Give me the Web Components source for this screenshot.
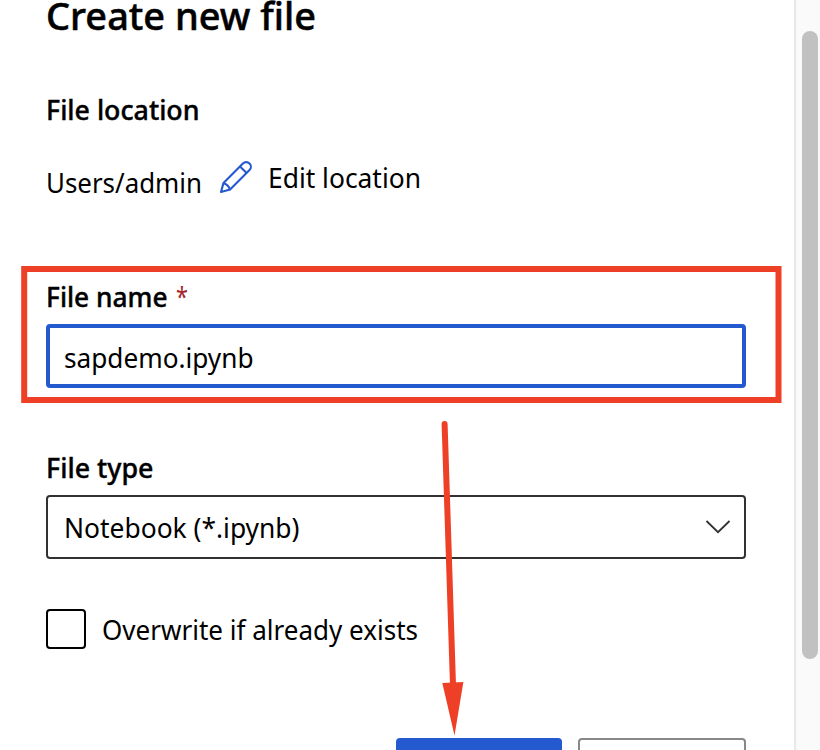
<!DOCTYPE html>
<html lang="en"><head><meta charset="utf-8"><title>Create new file</title>
<style>
html,body{margin:0;height:750px;overflow:hidden;background:#fff}
body{font-family:"Noto Sans","Open Sans",sans-serif;color:#000}
</style></head><body>
<create-file-page></create-file-page>
<script>
// A single line of text, condensed or widened to its measure.
customElements.define('fit-text', class extends HTMLElement{
  connectedCallback(){
    const r=this.attachShadow({mode:'open'});
    r.innerHTML='<style>:host{display:block;height:38px;font-size:27px;line-height:38px;white-space:pre;flex:none}span{display:inline-block;transform-origin:0 50%}</style><span><slot></slot></span>';
    const w=+this.getAttribute('measure'), s=r.querySelector('span');
    this.style.width=w+'px';
    s.style.transform='scaleX('+w/s.getBoundingClientRect().width+')';
  }
});
function define(name,html){
  const t=document.createElement('template'); t.innerHTML=html;
  customElements.define(name,class extends HTMLElement{
    constructor(){super();this.attachShadow({mode:'open'}).append(document.importNode(t.content,true));}
  });
}
define('pencil-icon','<style>:host{display:block;width:34px;height:34px}svg{display:block}</style><svg width="34" height="34" viewBox="0 0 34 34" fill="none" stroke="#2559cf" stroke-width="2.1" stroke-linejoin="round"><path d="M2 32L4.5 22.9L23.9 3.5A4.6 4.6 0 0 1 30.5 10.1L11.1 29.5Z"/><path d="M21 6.4L27.6 13M4.5 22.9Q9.3 24.8 11.1 29.5"/></svg>');
define('text-field','<style>:host{display:flex;box-sizing:border-box;width:700px;height:64px;border:4px solid #2559cf;border-radius:4px;padding:11px 14px 0}</style><slot></slot>');
define('select-field','<style>:host{display:flex;box-sizing:border-box;width:700px;height:64px;border:2px solid #323130;border-radius:4px;padding:12px 13px 0 16px;justify-content:space-between}svg{margin-top:10px}</style><slot></slot><svg width="26" height="16" fill="none" stroke="#323130" stroke-width="1.8"><path d="M1.5 2L13 13.2L24.5 2"/></svg>');
define('check-option','<style>:host{display:flex;height:40px;gap:16px}i{display:block;box-sizing:border-box;width:40px;height:40px;border:2px solid #000;border-radius:4px}div{padding-top:2px}</style><i></i><div><slot></slot></div>');
define('action-button','<style>:host{display:block;box-sizing:border-box;width:166px;height:64px;border-radius:4px;background:#2559cf}:host([secondary]){width:168px;background:#fff;border:2px solid #8a8886}</style><slot></slot>');
define('scroll-track','<style>:host{display:block;box-sizing:border-box;width:26px;height:750px;border-left:2px solid #e8e8e8;background:#fafafa;padding:31px 0 0 6px}i{display:block;width:16px;height:628px;border-radius:8px;background:#c1c1c1}</style><i></i>');
define('arrow-annotation','<style>:host{position:absolute;left:0;top:0;pointer-events:none}svg{display:block}</style><svg width="820" height="750"><rect x="24.2" y="269" width="754.3" height="131" fill="none" stroke="#ee4026" stroke-width="6"/><path d="M444.6 424L453 685" stroke="#ee4026" stroke-width="6" stroke-linecap="round"/><path d="M442.3 683L463.4 682L454.5 735.5Z" fill="#ee4026"/></svg>');
define('create-file-page',`<style>
:host{display:flex;width:820px;height:750px;overflow:hidden;position:relative}
main{width:748px;padding-left:46px;height:750px;overflow:hidden;flex:none}
.title{font-size:38.5px;font-weight:500;-webkit-text-stroke:.5px #000;line-height:30px;height:30px}
.label{font-weight:500;-webkit-text-stroke:.4px #000}
.location{margin-top:61px}
.row{display:flex;height:43px;margin-top:30px}
.users{margin-top:5px}pencil-icon{margin:1px 0 0 17px}.edit{margin-left:15px}
.name{display:flex;margin-top:76px;height:38px;gap:8px;color:#a4262c}.name .label{color:#000}
text-field{margin-top:8px}.type{margin-top:61px}select-field{margin-top:8px}
check-option{margin-top:50px}.actions{display:flex;gap:16px;margin:89px 0 0 350px}
</style><main>
<fit-text class="title" measure="270">Create new file</fit-text>
<fit-text class="label location" measure="153.5">File location</fit-text>
<div class="row"><fit-text class="users" measure="156">Users/admin</fit-text><pencil-icon></pencil-icon><fit-text class="edit" measure="153">Edit location</fit-text></div>
<div class="name"><fit-text class="label" measure="121.5">File name</fit-text><fit-text measure="12">*</fit-text></div>
<text-field><fit-text measure="189.5">sapdemo.ipynb</fit-text></text-field>
<fit-text class="label type" measure="107.5">File type</fit-text>
<select-field><fit-text measure="235.5">Notebook (*.ipynb)</fit-text></select-field>
<check-option><fit-text measure="316">Overwrite if already exists</fit-text></check-option>
<div class="actions"><action-button></action-button><action-button secondary></action-button></div>
</main><scroll-track></scroll-track><arrow-annotation></arrow-annotation>`);
</script></body></html>
